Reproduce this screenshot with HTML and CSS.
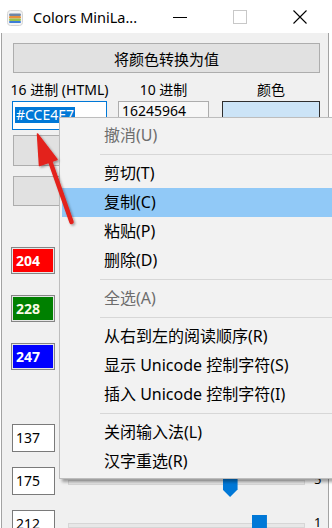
FILE: index.html
```html
<!DOCTYPE html>
<html lang="zh-CN">
<head>
    <meta charset="UTF-8">
    <title>Colors MiniLab</title>
    <link rel="stylesheet" href="styles.css">
</head>
<body>
    <div class="titlebar">
        <svg class="app-icon" viewBox="0 0 16 16">
            <rect x="0.5" y="0.5" width="15" height="15" rx="3" fill="#f4f4f4" stroke="#d4d4d4"/>
            <rect x="2" y="3.5" width="12" height="2.5" rx="1.2" fill="#6f86a6"/>
            <rect x="2" y="6" width="12" height="2.5" rx="1.2" fill="#e8903c"/>
            <rect x="2" y="8.5" width="12" height="2.5" rx="1.2" fill="#98c24c"/>
            <rect x="2" y="11" width="12" height="2" rx="1" fill="#3d7dd8"/>
        </svg>
        <span class="title">Colors MiniLa...</span>
        <div class="caption">
            <div class="cap-btn">
                <svg width="16" height="16" viewBox="0 0 16 16"><line x1="1" y1="8.5" x2="15" y2="8.5" stroke="#000"/></svg>
            </div>
            <div class="cap-btn">
                <svg width="16" height="16" viewBox="0 0 16 16"><rect x="1.5" y="1.5" width="13" height="13" fill="none" stroke="#c8c8c8"/></svg>
            </div>
            <div class="cap-btn">
                <svg width="16" height="16" viewBox="0 0 16 16"><path d="M1.5 1.5 L14.5 14.5 M14.5 1.5 L1.5 14.5" stroke="#000" stroke-width="1.1"/></svg>
            </div>
        </div>
    </div>

    <div class="window">
        <button class="convert">将颜色转换为值</button>

        <div class="fields">
            <div class="field hex">
                <label>16 进制 (HTML)</label>
                <div class="hex-input"><span class="sel">#CCE4E7</span></div>
            </div>
            <div class="field dec">
                <label>10 进制</label>
                <div class="dec-input">16245964</div>
            </div>
            <div class="field col">
                <label>颜色</label>
                <div class="swatch"></div>
            </div>
        </div>

        <div class="side-btn first"></div>
        <div class="side-btn"></div>

        <div class="chan red">204</div>
        <div class="chan green">228</div>
        <div class="chan blue">247</div>

        <div class="rows">
            <div class="row">
                <div class="num">137</div>
                <div class="slider">
                    <div class="track"></div>
                    <div class="thumb" style="left: calc(53.7% - 9px)"></div>
                </div>
                <span class="tick-label">5</span>
            </div>
            <div class="row">
                <div class="num">175</div>
                <div class="slider">
                    <div class="track"></div>
                    <div class="thumb" style="left: calc(68.6% - 8px)"></div>
                </div>
                <span class="tick-label">5</span>
            </div>
            <div class="row">
                <div class="num">212</div>
                <div class="slider">
                    <div class="track"></div>
                    <div class="thumb" style="left: calc(83.1% - 13px)"></div>
                </div>
                <span class="tick-label">1</span>
            </div>
        </div>
    </div>

    <div class="menu">
        <div class="menu-item off">撤消(U)</div>
        <div class="sep"></div>
        <div class="menu-item">剪切(T)</div>
        <div class="menu-item hot">复制(C)</div>
        <div class="menu-item">粘贴(P)</div>
        <div class="menu-item">删除(D)</div>
        <div class="sep"></div>
        <div class="menu-item off">全选(A)</div>
        <div class="sep"></div>
        <div class="menu-item">从右到左的阅读顺序(R)</div>
        <div class="menu-item">显示 Unicode 控制字符(S)</div>
        <div class="menu-item">插入 Unicode 控制字符(I)</div>
        <div class="sep"></div>
        <div class="menu-item">关闭输入法(L)</div>
        <div class="menu-item">汉字重选(R)</div>
    </div>

    <svg class="arrow" width="332" height="528" viewBox="0 0 332 528">
        <defs>
            <filter id="shade" x="-20%" y="-20%" width="140%" height="140%">
                <feDropShadow dx="1.5" dy="1.5" stdDeviation="1.2" flood-color="#000" flood-opacity="0.35"/>
            </filter>
        </defs>
        <g filter="url(#shade)" fill="#e3211c" stroke="#e3211c">
            <line x1="49" y1="158" x2="71.5" y2="222" stroke-width="4.5" stroke-linecap="round"/>
            <polygon points="37.5,134 57,159.5 39.5,165.5" stroke-width="1.5" stroke-linejoin="round"/>
        </g>
    </svg>
</body>
</html>
```

FILE: styles.css
```css
body {
    margin: 0;
    width: 332px;
    height: 528px;
    overflow: hidden;
    position: relative;
    background: #fff;
    font-family: "Noto Sans", "Noto Sans CJK SC", sans-serif;
    color: #000;
}
.titlebar {
    height: 33px;
    display: flex;
    align-items: center;
    background: #fff;
}
.app-icon {
    width: 16px;
    height: 16px;
    margin-left: 7px;
    margin-top: 2px;
}
.title {
    margin-left: 10px;
    font-size: 14.5px;
}
.caption {
    margin-left: auto;
    margin-right: 2px;
    display: flex;
    height: 33px;
}
.cap-btn {
    width: 60px;
    display: flex;
    align-items: center;
    justify-content: center;
}
.window {
    height: 485px;
    margin: 0 3px 0 1px;
    padding: 10px 0 0 10px;
    border-left: 1px solid #a3a3a3;
    border-right: 1px solid #a3a3a3;
    background: #f0f0f0;
}
.convert {
    display: block;
    margin-left: 1px;
    width: 307px;
    height: 30px;
    padding: 0;
    background: #e1e1e1;
    border: 1px solid #adadad;
    font-family: inherit;
    font-size: 15px;
    color: #000;
}
.fields {
    display: flex;
    margin-top: 7px;
}
.field label {
    display: flex;
    justify-content: center;
    height: 21px;
    line-height: 20px;
    font-size: 14px;
    white-space: nowrap;
}
.hex {
    width: 95px;
}
.dec {
    width: 91px;
    margin-left: 11px;
}
.col {
    width: 98px;
    margin-left: 13px;
}
.hex-input {
    height: 29px;
    border: 1px solid #0078d7;
    background: #fff;
    box-sizing: border-box;
    padding: 1px 0 0 2px;
}
.sel {
    display: inline-block;
    padding: 0 1px;
    line-height: 16px;
    font-size: 14px;
    background: #0078d7;
    color: #fff;
}
.dec-input {
    height: 29px;
    box-sizing: border-box;
    border: 1px solid #adadad;
    background: #f7f7f7;
    padding-left: 3px;
    font-size: 14px;
    line-height: 17px;
}
.swatch {
    height: 27px;
    border: 1px solid #2f2f2f;
    background: #cce4f7;
}
.side-btn {
    width: 94px;
    height: 28px;
    margin: 10px 0 0 1px;
    background: #e1e1e1;
    border: 1px solid #adadad;
}
.side-btn.first {
    height: 29px;
    margin-top: 5px;
}
.chan {
    width: 38px;
    height: 25px;
    margin: 21px 0 0 -1px;
    border: 1px solid #858585;
    box-shadow: inset 0 0 0 1px #e6e6e6;
    padding-left: 4px;
    font-size: 14px;
    font-weight: bold;
    line-height: 25px;
    color: #fff;
}
.chan.red {
    margin-top: 41px;
    background: #ff0000;
}
.chan.green {
    background: #008000;
    color: #fbfbe6;
}
.chan.blue {
    background: #0000ff;
}
.rows {
    margin-top: 54px;
}
.row {
    display: flex;
    height: 28px;
    margin-bottom: 15px;
}
.num {
    width: 38px;
    height: 26px;
    border: 1px solid #7a7a7a;
    background: #fff;
    padding-left: 3px;
    font-size: 14px;
    line-height: 26px;
}
.slider {
    position: relative;
    flex: 1;
    margin: 0 9px 0 13px;
}
.track {
    margin-top: 13px;
    height: 3px;
    border: 1px solid #d6d6d6;
    background: #e7e7e7;
}
.thumb {
    position: absolute;
    top: 5px;
    width: 15px;
    height: 25px;
    background: #0078d7;
    clip-path: polygon(0 0, 100% 0, 100% 70%, 50% 100%, 0 70%);
}
.tick-label {
    width: 14px;
    margin-top: 5px;
    font-size: 13px;
    line-height: 14px;
}
.menu {
    position: absolute;
    left: 59px;
    top: 117px;
    width: 290px;
    padding: 3px 2px 2px;
    background: #f2f2f2;
    border: 1px solid #bdbdbd;
    box-shadow: 3px 3px 3px rgba(0, 0, 0, 0.35);
}
.menu-item {
    height: 29px;
    line-height: 29px;
    padding-left: 42px;
    font-size: 16px;
    white-space: nowrap;
}
.menu-item.hot {
    background: #91c9f7;
}
.menu-item.off {
    color: #6d6d6d;
}
.sep {
    height: 1px;
    margin: 4px 0 4px 38px;
    background: #d7d7d7;
}
.arrow {
    position: absolute;
    left: 0;
    top: 0;
    pointer-events: none;
}
```
